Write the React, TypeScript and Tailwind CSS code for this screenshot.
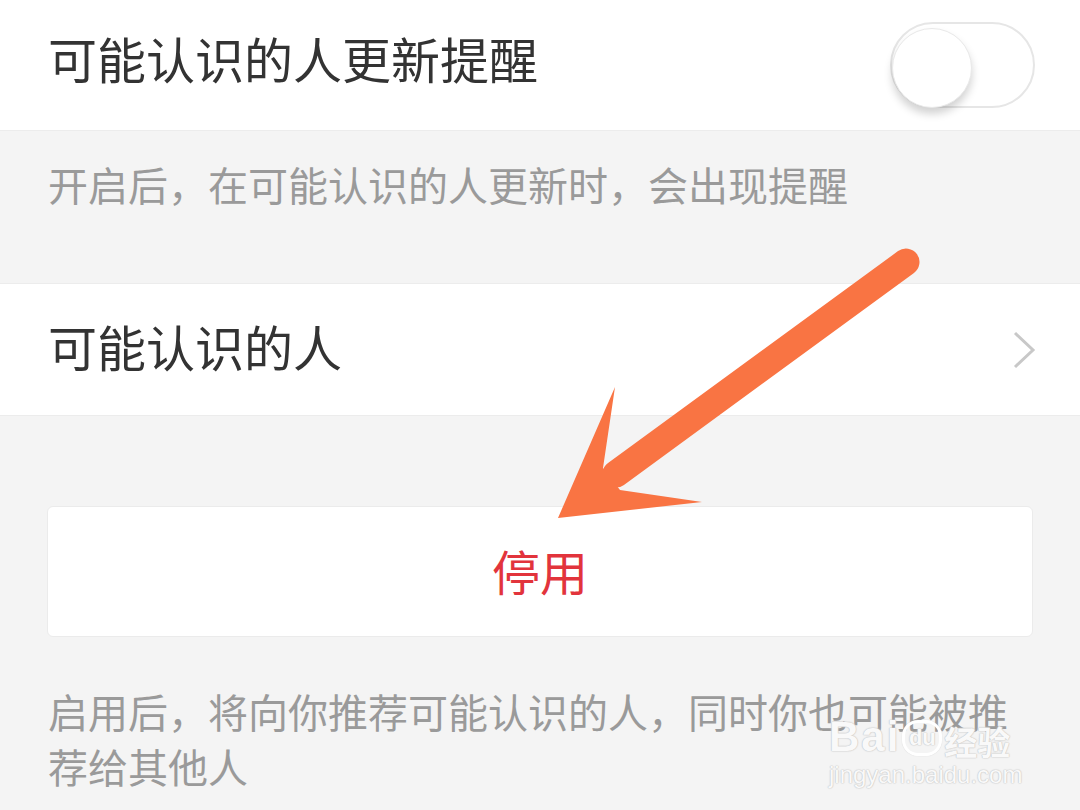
import React from "react"

const font = { fontFamily: '"Noto Sans CJK SC", "Noto Sans", sans-serif' }

function Toggle() {
  return (
    <div className="relative w-[145px] h-[86px] rounded-full border-2 border-[#e6e6e6] bg-white">
      <div className="absolute left-[0px] top-[4px] w-[80px] h-[80px] rounded-full bg-white border border-[#e9e9e9] shadow-[0_6px_8px_rgba(0,0,0,0.18)]" />
    </div>
  )
}

function Watermark() {
  const outline = { textShadow: "0 0 1px #c4c4c4, 0 0 1px #c4c4c4, 0 0 2px #d4d4d4" }
  return (
    <div className="absolute left-[829px] top-[716px] flex flex-col items-start text-white/90 pointer-events-none" style={outline}>
      <div className="flex items-end leading-none">
        <span className="text-[42px] font-bold tracking-[2px]" style={{ fontFamily: '"Liberation Sans", sans-serif' }}>
          Bai
        </span>
        <span
          className="ml-[2px] mb-[2px] w-[40px] h-[36px] rounded-[16px] border-[3px] border-white flex items-center justify-center text-[22px] font-bold"
          style={{ fontFamily: '"Liberation Sans", sans-serif', boxShadow: "0 0 1px #c4c4c4" }}
        >
          du
        </span>
        <span className="ml-[2px] text-[33px] font-bold" style={font}>
          经验
        </span>
      </div>
      <span className="text-[24px] leading-[26px] mt-[4px]" style={{ fontFamily: '"Liberation Sans", sans-serif' }}>
        jingyan.baidu.com
      </span>
    </div>
  )
}

function Arrow() {
  return (
    <svg className="absolute left-0 top-0 pointer-events-none" width="1080" height="810" viewBox="0 0 1080 810">
      <line x1="906" y1="262" x2="616" y2="474" stroke="#f97443" strokeWidth="27" strokeLinecap="round" />
      <polygon points="558,518 615,387 603,468 620,490 702,502" fill="#f97443" />
    </svg>
  )
}

export default function App() {
  return (
    <div className="relative w-[1080px] h-[810px] overflow-hidden bg-[#f4f4f4]" style={font}>
      {/* Reminder switch */}
      <div className="h-[131px] bg-white border-b border-[#ececec] flex items-center justify-between pl-[48px] pr-[45px]">
        <span className="text-[49px] leading-[60px] text-[#333333] -mt-[14px]">可能认识的人更新提醒</span>
        <Toggle />
      </div>
      <div className="h-[152px] pl-[48px] pt-[25px]">
        <p className="text-[40px] leading-[56px] text-[#9a9a9a]">开启后，在可能认识的人更新时，会出现提醒</p>
      </div>

      {/* People row */}
      <div className="h-[133px] bg-white border-y border-[#ececec] flex items-center justify-between pl-[48px] pr-[44px]">
        <span className="text-[49px] leading-[60px] text-[#333333] -mt-[8px]">可能认识的人</span>
        <svg width="24" height="40" viewBox="0 0 24 40">
          <polyline points="3,3 21,20 3,37" fill="none" stroke="#c8c8c8" strokeWidth="3" />
        </svg>
      </div>

      {/* Disable button */}
      <div className="pt-[90px] px-[47px]">
        <div className="h-[131px] rounded-[6px] bg-white border border-[#ebebeb] flex items-center justify-center">
          <span className="text-[48px] leading-[60px] text-[#e2343c] -mt-[4px]">停用</span>
        </div>
      </div>
      <p className="pl-[48px] pr-[47px] mt-[47px] text-[40px] leading-[55px] text-[#9a9a9a]">
        启用后，将向你推荐可能认识的人，同时你也可能被推荐给其他人
      </p>

      <Arrow />
      <Watermark />
    </div>
  )
}
